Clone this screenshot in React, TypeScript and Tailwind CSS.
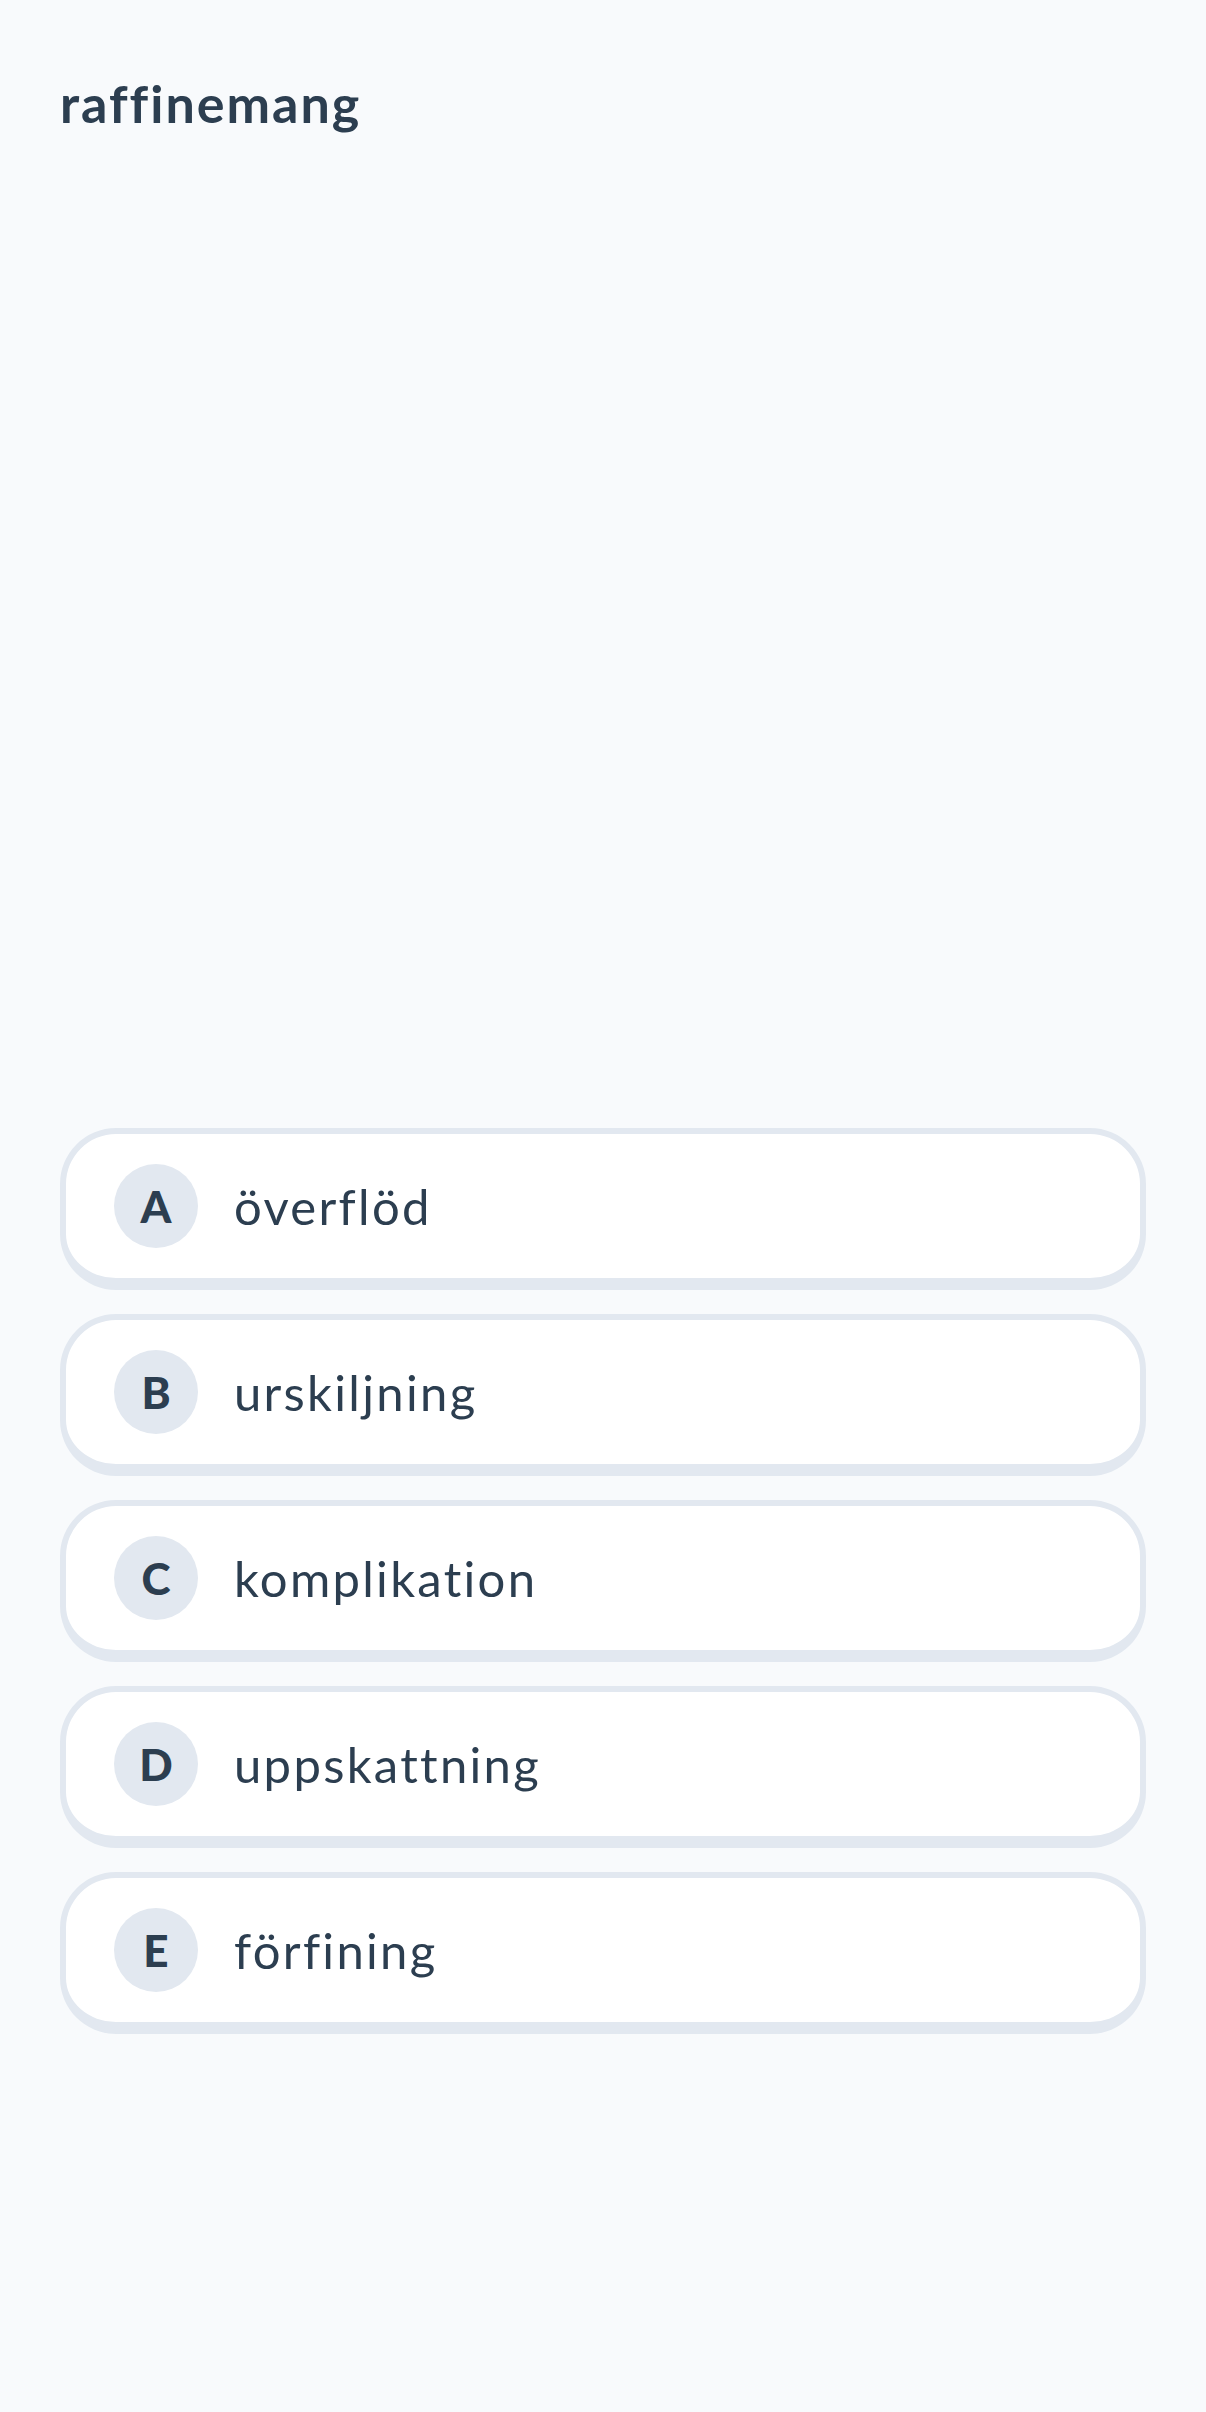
import React from "react";

const options = [
  { letter: "A", text: "överflöd" },
  { letter: "B", text: "urskiljning" },
  { letter: "C", text: "komplikation" },
  { letter: "D", text: "uppskattning" },
  { letter: "E", text: "förfining" },
];

export default function App() {
  return (
    <div
      className="min-h-screen w-full bg-[#f8fafc] text-[#2c3e50] [font-variant-ligatures:none]"
      style={{ fontFamily: "Lato, 'Noto Sans', sans-serif" }}
    >
      <div className="px-[60px] pt-[70px]">
        <h1 className="text-[52px] font-bold leading-[66px] tracking-[2px]">raffinemang</h1>
      </div>
      <div className="mt-[992px] flex flex-col gap-[24px] px-[60px]">
        {options.map((o) => (
          <div
            key={o.letter}
            className="flex h-[162px] items-center gap-[36px] rounded-[56px] border-[6px] border-b-[12px] border-[#e2e8f0] bg-white pl-[48px]"
          >
            <div className="flex h-[84px] w-[84px] shrink-0 items-center justify-center rounded-full bg-[#e2e8f0] text-[44px] font-black leading-none">
              {o.letter}
            </div>
            <div className="text-[49px] leading-none tracking-[2.3px]">{o.text}</div>
          </div>
        ))}
      </div>
    </div>
  );
}
